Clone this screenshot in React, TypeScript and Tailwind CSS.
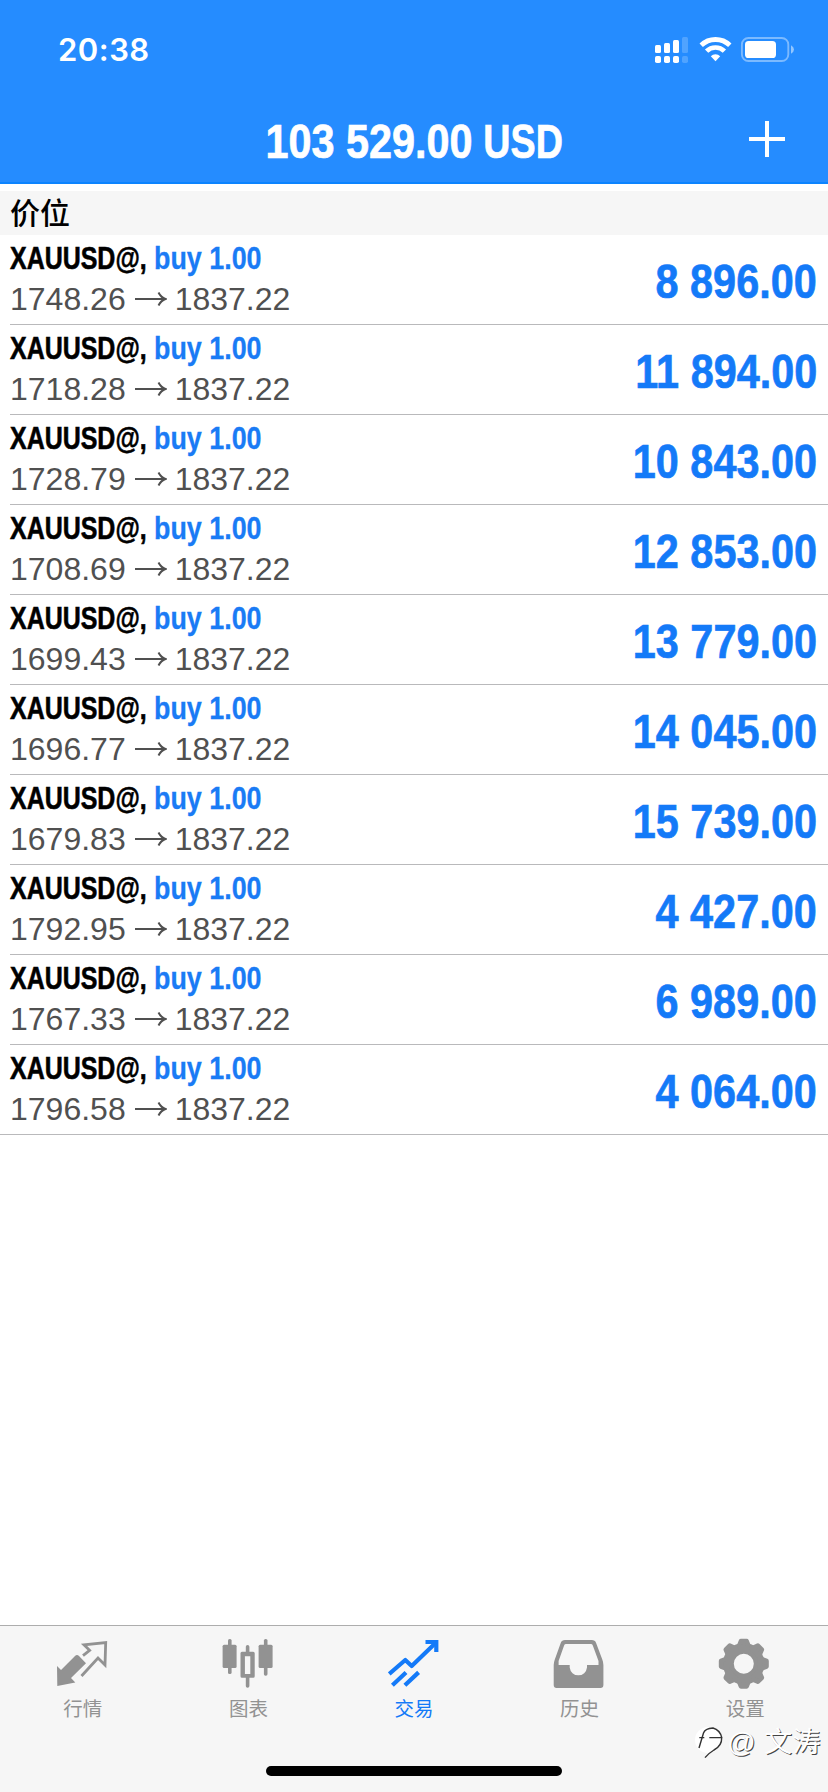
import React from 'react';

type Position = {
  symbol: string;
  side: string;
  open: string;
  current: string;
  profit: string;
};

type Tab = {
  label: string;
  icon: React.ReactNode;
  active?: boolean;
};

const position = (open: string, profit: string): Position => ({
  symbol: 'XAUUSD@,',
  side: 'buy 1.00',
  open,
  current: '1837.22',
  profit,
});

const POSITIONS: Position[] = [
  position('1748.26', '8 896.00'),
  position('1718.28', '11 894.00'),
  position('1728.79', '10 843.00'),
  position('1708.69', '12 853.00'),
  position('1699.43', '13 779.00'),
  position('1696.77', '14 045.00'),
  position('1679.83', '15 739.00'),
  position('1792.95', '4 427.00'),
  position('1767.33', '6 989.00'),
  position('1796.58', '4 064.00'),
];

const QuotesIcon = () => (
  <svg viewBox="0 0 52 52" className="h-[52px] w-[52px]">
    <path d="M0 28 4 32 18 18Q20 16 22 18L29 25.3 14 40 18.3 44.5 0.3 48Z" fill="currentColor" />
    <path d="M26 17.6 32.6 12.3 27 6.8 48.7 4.6 48 27 41 20 24.5 38" fill="none" stroke="currentColor" strokeWidth="2.8" />
  </svg>
);

const ChartIcon = () => (
  <svg viewBox="0 0 52 52" className="h-[52px] w-[52px]" fill="currentColor">
    <rect x="0.6" y="6.7" width="14" height="23.4" rx="1.5" />
    <rect x="6" y="1" width="3.6" height="35" rx="1.6" />
    <path fillRule="evenodd" d="M20 13.7h11.2a1.5 1.5 0 0 1 1.5 1.5v23a1.5 1.5 0 0 1-1.5 1.5H20a1.5 1.5 0 0 1-1.5-1.5v-23a1.5 1.5 0 0 1 1.5-1.5ZM22.9 18.3V36h5.4V18.3Z" />
    <path d="M23.8 14.5V8.8a1.8 1.8 0 0 1 3.6 0v5.7ZM23.8 39v9a1.8 1.8 0 0 0 3.6 0v-9Z" />
    <rect x="36.6" y="6.7" width="14" height="23.4" rx="1.5" />
    <rect x="41.9" y="1" width="3.6" height="36.7" rx="1.6" />
  </svg>
);

const TradeIcon = () => (
  <svg viewBox="0 0 52 52" className="h-[52px] w-[52px]" fill="none" stroke="currentColor" strokeWidth="4.2">
    <path d="M1.2 36 17.3 22 23.7 28 47 5.5" strokeLinejoin="round" />
    <path d="M37.5 4H48.3V14" />
    <path d="M4.4 47.3 18 34.4M16.9 47.3 30.6 34.4" />
  </svg>
);

const HistoryIcon = () => (
  <svg viewBox="0 0 52 52" className="h-[52px] w-[52px] overflow-visible" fill="currentColor">
    <path
      fillRule="evenodd"
      d="M11 2H37.8Q41 2 42 4.8L48.3 21.5Q49.4 24.5 49.4 27V47Q49.4 50 46.4 50H2.6Q-0.3 50 -0.3 47V27Q-0.3 24.5 0.8 21.5L6.8 4.8Q7.8 2 11 2ZM12 6Q10.6 6 10.1 7.4L4.6 23V27H15.7V29.6A8.7 8.7 0 0 0 33 29.6V27H44.5V23L38.8 7.4Q38.3 6 36.9 6Z"
    />
  </svg>
);

const TEETH = [0, 45, 90, 135, 180, 225, 270, 315];

const SettingsIcon = () => (
  <svg viewBox="0 0 52 52" className="h-[52px] w-[52px] overflow-visible">
    <circle cx="24.8" cy="25.7" r="15.4" fill="none" stroke="currentColor" strokeWidth="10.8" />
    {TEETH.map(angle => (
      <path
        key={angle}
        d="M22 3H27.6L30.2 9.6H19.4Z"
        fill="currentColor"
        stroke="currentColor"
        strokeWidth="4.6"
        strokeLinejoin="round"
        transform={`rotate(${angle} 24.8 25.7)`}
      />
    ))}
  </svg>
);

const TABS: Tab[] = [
  { label: '行情', icon: <QuotesIcon /> },
  { label: '图表', icon: <ChartIcon /> },
  { label: '交易', icon: <TradeIcon />, active: true },
  { label: '历史', icon: <HistoryIcon /> },
  { label: '设置', icon: <SettingsIcon /> },
];

const StatusIcons = () => (
  <svg viewBox="0 0 142 28" className="h-7 w-[142px]" fill="#fff">
    <rect x="1" y="9" width="6" height="8" rx="1.5" />
    <rect x="10" y="7" width="6" height="10" rx="1.5" />
    <rect x="19" y="4" width="6" height="13" rx="1.5" />
    <rect x="28" y="1" width="6" height="16" rx="1.5" opacity="0.2" />
    <rect x="1" y="20" width="6" height="7" rx="1.8" />
    <rect x="10" y="20" width="6" height="7" rx="1.8" />
    <rect x="19" y="20" width="6" height="7" rx="1.8" />
    <rect x="28" y="20" width="6" height="7" rx="1.8" opacity="0.2" />
    <path d="M47.2 9.3A20.5 20.5 0 0 1 75.8 9.3" fill="none" stroke="#fff" strokeWidth="4.8" />
    <path d="M52.6 15.2A12.4 12.4 0 0 1 70.4 15.2" fill="none" stroke="#fff" strokeWidth="4.6" />
    <path d="M56.8 20.2A6.7 6.7 0 0 1 66.2 20.2L61.5 25.2Z" />
    <rect x="87.9" y="2" width="46.4" height="23" rx="6.5" fill="none" stroke="#fff" strokeWidth="1.9" opacity="0.4" />
    <rect x="91" y="5" width="31" height="17" rx="3.6" />
    <path d="M137 9.3Q140 11 140 13.5T137 17.7Z" opacity="0.5" />
  </svg>
);

const PositionRow: React.FC<{ item: Position; last: boolean }> = ({ item, last }) => (
  <li className={last ? 'border-b border-[#b9b9bb]' : 'ml-[10px] border-b border-[#b9b9bb]'}>
    <div className={`flex h-[89px] items-center justify-between pr-[11px] ${last ? 'pl-[10px]' : ''}`}>
      <div className="pb-[3px]">
        <p className="flex h-[41px] items-center whitespace-nowrap text-[32px] font-bold leading-none">
          <span className="w-[144px] origin-left scale-x-[0.78] text-black [-webkit-text-stroke:0.6px_#000]">{item.symbol}</span>
          <span className="origin-left scale-x-[0.84] text-[#1a7bf5] [-webkit-text-stroke:0.3px_#1a7bf5]">{item.side}</span>
        </p>
        <p className="flex h-[41px] items-center text-[32px] leading-none text-[#505050]">
          <span>{item.open}</span>
          <svg viewBox="0 0 32 20" className="ml-[9px] mr-[8px] h-5 w-8" fill="none" stroke="currentColor" strokeWidth="2">
            <path d="M0 10H30M23.5 3.5Q26 8.5 30.5 10Q26 11.5 23.5 16.5" />
          </svg>
          <span>{item.current}</span>
        </p>
      </div>
      <span className="origin-right scale-x-[0.845] pt-[4px] text-[49px] font-bold leading-none text-[#147af8] [-webkit-text-stroke:0.7px_#147af8]">
        {item.profit}
      </span>
    </div>
  </li>
);

const App: React.FC = () => {
  return (
    <div className="relative flex h-[1792px] w-[828px] flex-col overflow-hidden bg-white font-['Liberation_Sans','Noto_Sans_CJK_SC',sans-serif]">
      <header className="h-[184px] shrink-0 border-b-2 border-[#0c84ff] bg-[#258cff] text-white">
        <div className="flex h-[100px] items-center justify-between pl-[58px] pr-[32px]">
          <span className="font-['Inter'] text-[31px] font-semibold tracking-[0.5px]">20:38</span>
          <StatusIcons />
        </div>
        <div className="grid h-[82px] grid-cols-[124px_1fr_124px] items-center">
          <h1 className="col-start-2 flex origin-center scale-x-[0.845] justify-center gap-[13px] whitespace-nowrap pl-[10px] text-[49px] font-bold leading-none [-webkit-text-stroke:0.7px_#fff]">
            <span>103 529.00</span>
            <span className="origin-left scale-x-[0.91]">USD</span>
          </h1>
          <button aria-label="New order" className="flex justify-center pb-[4px] pl-[2px]">
            <svg viewBox="0 0 36 36" className="h-9 w-9" fill="none" stroke="#fff" strokeWidth="4">
              <path d="M18 0V36M0 18H36" />
            </svg>
          </button>
        </div>
      </header>

      <main className="flex-1 pt-[7px]">
        <h2 className="flex h-[44px] items-center bg-[#f6f6f6] pl-[10px] pt-[2px] text-[30px] font-medium leading-none text-black">价位</h2>
        <ul>
          {POSITIONS.map((item, index) => (
            <PositionRow key={item.open} item={item} last={index === POSITIONS.length - 1} />
          ))}
        </ul>
      </main>

      <footer className="flex h-[167px] shrink-0 flex-col items-center justify-between border-t border-[#adadad] bg-[#f6f6f6] pb-4">
        <nav className="grid w-full grid-cols-5 pt-[12px]">
          {TABS.map(tab => (
            <button key={tab.label} className={`flex flex-col items-center ${tab.active ? 'text-[#147af8]' : 'text-[#929292]'}`}>
              {tab.icon}
              <span className="mt-[4px] text-[19.5px] leading-[30px]">{tab.label}</span>
            </button>
          ))}
        </nav>
        <div className="h-[10px] w-[296px] rounded-full bg-black" />
      </footer>

      {/* author mark over the tab bar */}
      <div className="absolute bottom-[29px] right-[7px] flex items-center text-white">
        <svg viewBox="0 0 32 36" className="mr-[1px] h-9 w-8 overflow-visible" fill="none">
          <circle cx="14" cy="15" r="13" fill="#fff" />
          <path d="M5 23 9.5 8Q11 3.5 19 3Q26 5 27.7 12.5" stroke="#333" strokeWidth="1.4" />
          <path d="M5.3 12.6H10.3M15.3 12.6H27.7Q28 21 20 25Q15 28 11 32.6" stroke="#333" strokeWidth="1.4" />
        </svg>
        <span className="text-[28px] leading-[40px] tracking-[0.4px] [text-shadow:1px_1px_0.5px_#444]">@ 文涛</span>
      </div>
    </div>
  );
};

export default App;
